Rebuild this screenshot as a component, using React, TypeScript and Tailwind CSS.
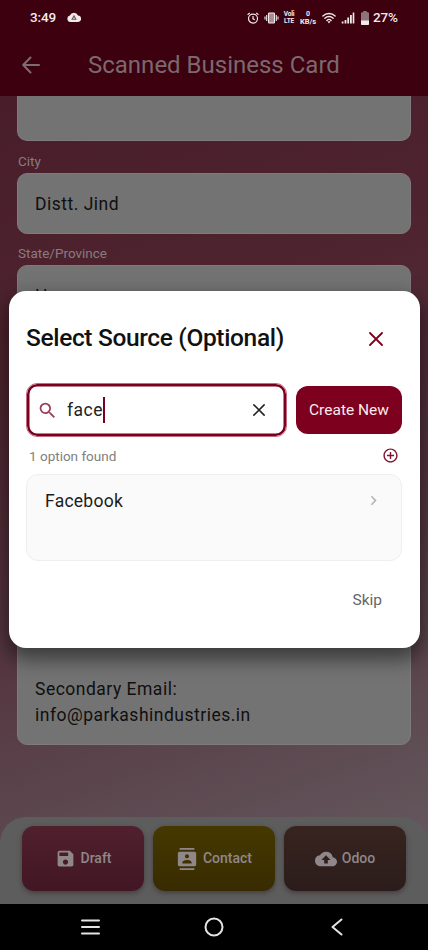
import type { ReactNode } from 'react'
import { MdBackup, MdContacts, MdOutlineAddCircleOutline, MdOutlineChevronRight, MdSave, MdSearch } from 'react-icons/md'

function CrossIcon({ className }: { className: string }) {
  return (
    <svg viewBox="0 0 14 14" fill="none" stroke="currentColor" strokeLinecap="round" className={className}>
      <path d="M1 1l12 12M13 1L1 13" strokeWidth="1.8" />
    </svg>
  )
}

function StatusBar() {
  return (
    <div className="flex h-[35px] items-center pl-[30px] pr-[30px] text-[#f3e9eb]">
      <span className="w-[37px] text-[13.5px] font-medium leading-none tracking-[-0.1px]">3:49</span>
      <svg viewBox="0 0 14 10" className="mb-[2px] h-[10px] w-[14px]">
        <path d="M3.4 10A3.3 3.3 0 0 1 2.9 3.5 4.4 4.4 0 0 1 11 3.6 3.2 3.2 0 0 1 10.8 10z" fill="currentColor" />
        <path d="M7 2.7L9.8 7.8H4.2z" fill="#675058" />
        <path d="M7 4.8L8.2 7H5.8z" fill="#c9bcc0" />
      </svg>

      <div className="ml-auto flex items-center">
        <svg viewBox="0 0 12 12" fill="none" stroke="currentColor" className="h-[12px] w-[12px]">
          <circle cx="6" cy="6.6" r="4.5" strokeWidth="1.2" />
          <path d="M6 4.1v2.7l1.8 1M.6 2.8L2.8.9M11.4 2.8L9.2.9" strokeWidth="1.2" />
        </svg>
        <svg viewBox="0 0 14 12" fill="none" stroke="currentColor" className="ml-[5px] h-[12px] w-[15px]">
          <rect x="4" y="1" width="6" height="10" rx="0.8" fill="#a78d94" strokeWidth="1.1" />
          <path d="M2.2 3v6M11.8 3v6M.5 4.5v3M13.5 4.5v3" strokeWidth="1.1" />
        </svg>
        <div className="ml-[4px] w-[12px] text-center text-[6.5px] font-bold leading-[6.5px] tracking-[-0.2px]">
          <div>Voli</div>
          <div>LTE</div>
        </div>
        <div className="ml-[4px] w-[18px] text-center text-[7.5px] font-bold leading-[8px] tracking-[-0.1px]">
          <div className="text-[7px]">0</div>
          <div>KB/s</div>
        </div>
        <svg viewBox="0 0 14 12" fill="none" stroke="currentColor" strokeLinecap="round" className="ml-[5px] h-[12px] w-[14px]">
          <path d="M.9 3.9a8.8 8.8 0 0 1 12.2 0M2.9 6.2a5.9 5.9 0 0 1 8.2 0M4.9 8.4a3 3 0 0 1 4.2 0" strokeWidth="1.4" />
          <path d="M5.4 9.2h3.2L7 11.4z" fill="currentColor" stroke="none" />
        </svg>
        <svg viewBox="0 0 14 12" fill="currentColor" className="ml-[5px] h-[12px] w-[14px]">
          <path d="M.7 9.5h1.8v2H.7zM3.6 8h1.8v3.5H3.6zM6.3 5.5h1.8v6H6.3zM9 3h1.8v8.5H9zM11.7.6h1.6v10.9h-1.6z" />
        </svg>
        <svg viewBox="0 0 8 14" className="ml-[6px] h-[14px] w-[8px]">
          <path d="M2.2 0h3.6v1.2H7a1 1 0 0 1 1 1V13a1 1 0 0 1-1 1H1a1 1 0 0 1-1-1V2.2a1 1 0 0 1 1-1h1.2z" fill="#8f737b" />
          <path d="M0 9.5h8V13a1 1 0 0 1-1 1H1a1 1 0 0 1-1-1z" fill="currentColor" />
        </svg>
        <span className="ml-[4px] w-[25px] text-[13.5px] font-medium leading-none tracking-[-0.2px]">27%</span>
      </div>
    </div>
  )
}

function Field({ label, children }: { label: string; children: ReactNode }) {
  return (
    <div className="mb-[11px]">
      <div className="mb-[2px] h-[18px] pl-px text-[13.5px] leading-[16px] text-[#8b7a80]">{label}</div>
      <div className="flex h-[61px] items-center rounded-[10px] border border-[#7f7a7b] bg-[#737373] px-[17px] pt-px text-[17.5px] tracking-[0.5px] text-[#0f0f0f]">
        {children}
      </div>
    </div>
  )
}

const actions = [
  { label: 'Draft', icon: <MdSave className="size-[21px]" />, style: 'from-[#50202e] to-[#421624]' },
  { label: 'Contact', icon: <MdContacts className="size-[22px]" />, style: 'from-[#453900] to-[#382b02]' },
  { label: 'Odoo', icon: <MdBackup className="size-[22px]" />, style: 'from-[#38241f] to-[#2b1c1b]' },
]

function SourceDialog() {
  return (
    <div className="absolute left-[9px] top-[291px] flex h-[357px] w-[411px] flex-col rounded-[17px] bg-white pl-[17px] pr-[18px] shadow-[0_9px_20px_2px_rgba(0,0,0,0.5)]">
      <div className="flex h-[92px] items-center justify-between pr-[19px] pt-[3px]">
        <h2 className="text-[24.5px] font-medium leading-none tracking-[-0.35px] text-[#111]">Select Source (Optional)</h2>
        <CrossIcon className="size-[14px] text-[#7d001f]" />
      </div>

      <div className="flex items-center">
        <div className="flex h-[54px] w-[261px] items-center rounded-[11px] border border-[#c46a80] pl-[10px] pr-[21px] ring-[2.5px] ring-inset ring-[#7a001e]">
          <MdSearch className="size-[21px] text-[#984058]" />
          <span className="ml-[9px] text-[17.5px] tracking-[0.5px] text-[#222]">face</span>
          <span className="h-[26px] w-[2px] bg-[#7a001e]" />
          <CrossIcon className="ml-auto size-[12px] text-[#222]" />
        </div>
        <button className="ml-[9px] h-[48px] w-[106px] rounded-[12px] bg-[#7d001e] pt-[2px] text-[15.5px] text-[#fbe9ed]">
          Create New
        </button>
      </div>

      <div className="flex h-[37px] items-center justify-between pl-[3px] pr-[3px]">
        <span className="pt-px text-[13.5px] text-[#808080]">1 option found</span>
        <MdOutlineAddCircleOutline className="size-[17px] text-[#7d1534]" />
      </div>

      <div className="h-[87px] rounded-[12px] border border-[#eee] bg-[#fafafa] pl-[18px] pr-[18px]">
        <div className="flex h-[51px] items-center justify-between">
          <span className="pt-[2px] text-[17.5px] tracking-[0.25px] text-[#1c1c1c]">Facebook</span>
          <MdOutlineChevronRight className="size-[19px] text-[#b4b4b4]" />
        </div>
      </div>

      <div className="flex h-[80px] items-center justify-end pr-[20px]">
        <span className="text-[15.5px] text-[#666]">Skip</span>
      </div>
    </div>
  )
}

export default function App() {
  return (
    <div className="relative flex h-[950px] w-[428px] flex-col overflow-hidden bg-black font-[Roboto,sans-serif]">
      <header className="h-[96px] shrink-0 bg-[#3c000f]">
        <StatusBar />
        <div className="flex h-[60px] items-center pl-[22px]">
          <svg viewBox="0 0 18 18" fill="none" stroke="#7d6c71" strokeLinecap="round" strokeLinejoin="round" className="size-[18px]">
            <path d="M17 9H1.2M8.5 1.5L1.2 9l7.3 7.5" strokeWidth="2" />
          </svg>
          <h1 className="ml-[48px] text-[24px] leading-none text-[#7b696e]">Scanned Business Card</h1>
        </div>
      </header>

      <main className="flex h-[808px] flex-col bg-linear-[160deg,#491e2a_0%,#4e2430_30%,#553741_60%,#62545a_90%,#665a60_100%]">
        <div className="flex h-[721px] flex-col px-[17px]">
          <div className="mb-[12px] h-[45px] shrink-0 rounded-b-[10px] border border-t-0 border-[#7f7a7b] bg-[#737373]" />
          <Field label="City">Distt. Jind</Field>
          <Field label="State/Province">Haryana</Field>
          <div className="mt-auto mb-[72px] flex h-[240px] flex-col justify-end rounded-[10px] border border-[#7f7a7b] bg-[#737373] px-[17px] pb-[16px] text-[17.5px] leading-[26px] tracking-[0.5px] text-[#0f0f0f]">
            <p>Secondary Email:</p>
            <p>info@parkashindustries.in</p>
          </div>
        </div>

        <div className="flex h-[87px] gap-[9px] rounded-t-[26px] bg-[#5e5d5d] px-[22px] pt-[9px]">
          {actions.map((action) => (
            <button
              key={action.label}
              className={`flex h-[65px] w-[122px] items-center justify-center gap-[5px] rounded-[12px] bg-linear-to-b text-[14px] font-medium text-[#8f8789] shadow-[0_2px_5px_rgba(30,10,15,0.4)] ${action.style}`}
            >
              {action.icon}
              {action.label}
            </button>
          ))}
        </div>
      </main>

      <nav className="flex h-[46px] items-center bg-black pl-[81px] text-[#e4e4e4]">
        <svg viewBox="0 0 19 16" fill="none" stroke="currentColor" strokeLinecap="round" className="h-[16px] w-[19px]">
          <path d="M1 1.5h17M1 8h17M1 14.5h17" strokeWidth="2" />
        </svg>
        <svg viewBox="0 0 20 20" fill="none" stroke="currentColor" className="ml-[104px] size-[20px]">
          <circle cx="10" cy="10" r="8.5" strokeWidth="2" />
        </svg>
        <svg viewBox="0 0 12 18" fill="none" stroke="currentColor" strokeLinecap="round" strokeLinejoin="round" className="ml-[107px] h-[18px] w-[12px]">
          <path d="M10.5 1.5L1.5 9l9 7.5" strokeWidth="2" />
        </svg>
      </nav>

      <SourceDialog />
    </div>
  )
}
